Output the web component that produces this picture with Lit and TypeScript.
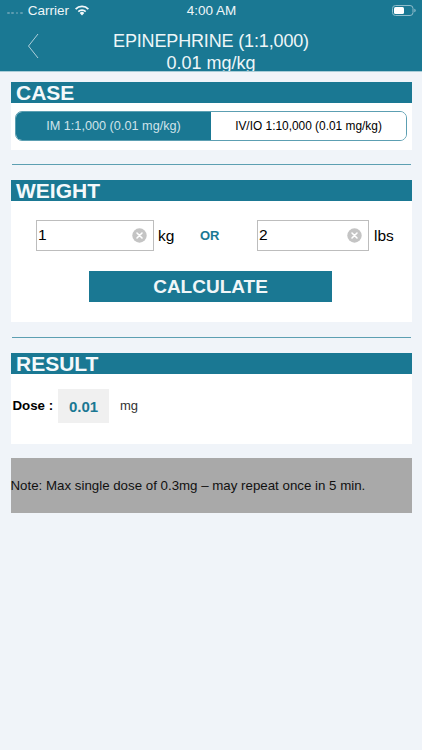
import { LitElement, html, css } from "lit";
import { customElement } from "lit/decorators.js";

@customElement("app-root")
export class AppRoot extends LitElement {
  static styles = css`
    :host { display: block; width: 422px; height: 750px; background: #f0f4f9; font-family: "Liberation Sans", Arial, sans-serif; color: #000; overflow: hidden; }
    .top { height: 71px; background: #1a7893; border-bottom: 1px solid #a9cdd8; color: #eef6f8; display: flex; flex-direction: column; overflow: hidden; }
    .status { height: 20px; flex: none; display: grid; grid-template-columns: 1fr auto 1fr; align-items: center; font-size: 13.5px; padding: 0 6px 0 7px; }
    .st-left { display: flex; align-items: center; gap: 5px; }
    .dots { display: flex; gap: 1.5px; margin-top: 6px; }
    .dots i { width: 2.8px; height: 2.8px; border-radius: 50%; background: #5f9db0; }
    .st-right { display: flex; justify-content: flex-end; }
    .nav { flex: 1; position: relative; display: flex; flex-direction: column; align-items: center; font-size: 18px; line-height: 21.5px; padding-top: 11px; min-height: 0; }
    .title { letter-spacing: -0.15px; }
    .back { position: absolute; left: 27px; top: 13px; }
    .content { padding: 10px 10.5px 0; display: flex; flex-direction: column; }
    .head { height: 21px; background: #1a7893; color: #f4f9fb; font-size: 21px; font-weight: 700; line-height: 22px; padding-left: 5.5px; }
    .panel { background: #fff; }
    .p-case { height: 47px; padding: 8px 4.5px 0; box-sizing: border-box; }
    .seg { display: flex; height: 30px; border: 1px solid #5c9fb2; border-radius: 7px; overflow: hidden; box-sizing: border-box; }
    .seg div { display: flex; align-items: center; justify-content: center; }
    .seg .on { width: 195px; background: #1a7893; color: #cfe3ea; font-size: 12.7px; }
    .seg .off { flex: 1; background: #fff; font-size: 11.9px; }
    hr { border: 0; height: 1px; background: #5c9fb2; margin: 14px 1px 15px; }
    hr.second { margin-top: 15px; }
    .p-weight { height: 121px; box-sizing: border-box; padding: 19px 0 0 25.5px; display: flex; flex-direction: column; }
    .row { display: flex; align-items: center; height: 31px; }
    .field { height: 31px; box-sizing: border-box; border: 1.5px solid #bdbdbd; display: flex; align-items: center; justify-content: space-between; padding: 0 6px 0 1px; font-size: 15.5px; }
    .field span { margin-top: -1px; }
    .f1 { width: 118px; }
    .f2 { width: 112px; }
    .clear { display: block; }
    .unit { font-size: 15.5px; }
    .kg { margin-left: 4px; width: 28px; }
    .lbs { margin-left: 5px; }
    .or { width: 71px; padding-left: 14px; box-sizing: border-box; color: #1a7893; font-size: 13px; font-weight: 700; }
    .calc { width: 243px; height: 31px; margin: 20px 0 0 53px; background: #1a7893; color: #f0f6f8; font-size: 19px; font-weight: 700; display: flex; align-items: center; justify-content: center; }
    .p-result { height: 70px; box-sizing: border-box; padding: 15px 0 0 2px; display: flex; align-items: flex-start; }
    .dose { font-size: 13.3px; font-weight: 700; height: 34px; line-height: 34px; width: 45.5px; }
    .val { width: 51px; height: 34px; background: #f0f0f0; color: #1a7893; font-size: 15px; font-weight: 700; display: flex; align-items: center; justify-content: center; }
    .mg { margin-left: 11px; font-size: 13px; line-height: 34px; color: #333; }
    .note { margin-top: 14px; height: 55px; background: #a9a9a9; display: flex; align-items: center; font-size: 13.3px; color: #111; }
  `;

  clearIcon() {
    return html`<svg class="clear" width="15" height="15" viewBox="0 0 15 15"><circle cx="7.5" cy="7.5" r="7.2" fill="#c4c4c4"/><path d="M5 5l5 5M10 5l-5 5" stroke="#fff" stroke-width="1.6" stroke-linecap="round"/></svg>`;
  }

  render() {
    return html`
      <div class="top">
        <div class="status">
          <div class="st-left">
            <span class="dots"><i></i><i></i><i></i><i></i></span>
            <span>Carrier</span>
            <svg width="16" height="12" viewBox="0 0 16 12"><path d="M8 11.5 5.7 8.9a3.4 3.4 0 0 1 4.6 0z M8 5.200a6 6 0 0 1 4.300 1.700l-1.200 1.300a4.400 4.400 0 0 0-6.200 0L3.700 6.900A6 6 0 0 1 8 5.200z M8 1.600a9.600 9.600 0 0 1 7 2.900l-1.300 1.300a7.800 7.800 0 0 0-11.400 0L1 4.500a9.600 9.600 0 0 1 7-2.900z" fill="#f2f8fa"/></svg>
          </div>
          <span>4:00 AM</span>
          <div class="st-right">
            <svg width="24" height="11" viewBox="0 0 24 11"><rect x="0.5" y="0.5" width="20.500" height="10" rx="3" fill="none" stroke="#8fbccb"/><rect x="2" y="2" width="10" height="7" rx="1.500" fill="#fff"/><path d="M22.300 3.700c1 .3 1.400.9 1.400 1.800s-.4 1.500-1.400 1.800z" fill="#8fbccb"/></svg>
          </div>
        </div>
        <div class="nav">
          <svg class="back" width="12" height="26" viewBox="0 0 12 26"><path d="M11 1 1.500 13 11 25" fill="none" stroke="#d5e6ec" stroke-width="0.8"/></svg>
          <span class="title">EPINEPHRINE (1:1,000)</span>
          <span>0.01 mg/kg</span>
        </div>
      </div>
      <div class="content">
        <div class="head">CASE</div>
        <div class="panel p-case">
          <div class="seg"><div class="on">IM 1:1,000 (0.01 mg/kg)</div><div class="off">IV/IO 1:10,000 (0.01 mg/kg)</div></div>
        </div>
        <hr />
        <div class="head">WEIGHT</div>
        <div class="panel p-weight">
          <div class="row">
            <div class="field f1"><span>1</span>${this.clearIcon()}</div>
            <span class="unit kg">kg</span>
            <div class="or">OR</div>
            <div class="field f2"><span>2</span>${this.clearIcon()}</div>
            <span class="unit lbs">lbs</span>
          </div>
          <div class="calc">CALCULATE</div>
        </div>
        <hr class="second" />
        <div class="head">RESULT</div>
        <div class="panel p-result">
          <span class="dose">Dose :</span>
          <div class="val">0.01</div>
          <span class="mg">mg</span>
        </div>
        <div class="note">Note: Max single dose of 0.3mg – may repeat once in 5 min.</div>
      </div>
    `;
  }
}
